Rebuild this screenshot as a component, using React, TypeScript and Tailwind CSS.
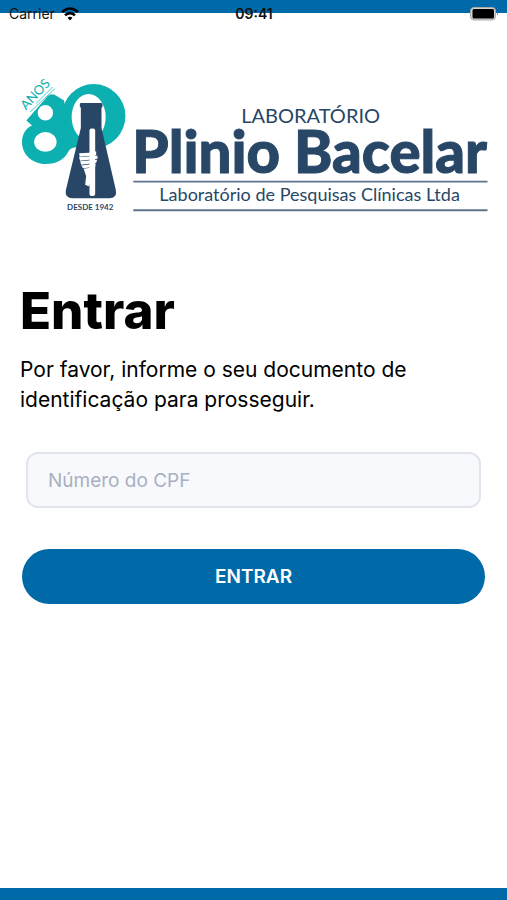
import { useState } from 'react';

function Logo() {
    return (
        <svg viewBox="21 78 466 136" className="block w-full overflow-visible" role="img" aria-label="Laboratório Plinio Bacelar">
            {/* 80 */}
            <g fill="#0db0b0">
                <path
                    fillRule="evenodd"
                    d="M94.5 84 A31.7 32 0 1 1 94.5 148 A31.7 32 0 1 1 94.5 84Z M89.5 94 A17 23 0 1 0 89.5 140 A17 23 0 1 0 89.5 94Z"
                />
                <path
                    fillRule="evenodd"
                    d="M27.300 120.500 L48.700 96 Q51.500 93 55.500 94.800 L65 100.500 L68 125 L80 140 L78 147 Q71.500 147 69.500 151 Q63 163.700 46.500 163.700 C33 163.700 23 154 23 142 C23 134 27 128 33 125.500Z M46.300 105 A7.700 7.700 0 1 0 46.300 120.400 A7.700 7.700 0 1 0 46.300 105Z M46.300 132 A11.200 9.800 0 1 0 46.300 151.600 A11.200 9.800 0 1 0 46.300 132Z"
                />
            </g>
            <text x="27" y="110.500" transform="rotate(-47 27 110.500)" fontSize="13" fill="#0db0b0" className="font-['Lato']">
                ANOS
            </text>
            <path d="M31 112 L56 88.500 M37 103.500 L53.500 87" stroke="#0db0b0" strokeWidth=".7" />

            {/* Flask */}
            <path
                d="M80.700 104 Q80.700 103 82 103 H102 Q103.300 103 103.300 104 V107.300 H102.300 V128 L116.700 190 Q118 198 110 198 H73.500 Q65.500 198 66.700 190 L81.700 128 V107.300 H80.700Z"
                fill="#284767"
            />
            <rect x="90.300" y="128.300" width="5.700" height="67.500" rx="2" fill="#fff" />
            {/* Hand */}
            <g fill="#fff">
                <path d="M80 153 L90 152.500 L97 151 V155 L80.500 156.500Z" />
                <path d="M79.800 157 L98.300 155.500 V158.500 L81 160.500Z" />
                <path d="M81 161.200 L98 159.500 L97 162.500 L82 164.500Z" />
                <path d="M82 165.200 L96.500 163.500 L96 166.500 L84 168Z" />
                <path d="M84.500 168.500 L91 167.500 V184 L89.500 186 L86 184.500 L87 176Z" />
            </g>

            <g fill="#284767" className="font-['Lato']">
                <text x="68" y="210" fontSize="8" className="font-bold">DESDE 1942</text>
                <text x="311" y="123" fontSize="20" textAnchor="middle">LABORATÓRIO</text>
                <text x="310" y="173" fontSize="58" textAnchor="middle" stroke="#284767" className="font-black">Plinio Bacelar</text>
                <text x="310" y="201" fontSize="18" textAnchor="middle">Laboratório de Pesquisas Clínicas Ltda</text>
            </g>
            <path d="M134 181.500 H487.500 M134 210 H487.500" stroke="#5d748d" strokeWidth="1.800" />
        </svg>
    );
}

function StatusBar() {
    return (
        <div className="absolute inset-x-0 top-0 grid grid-cols-3 items-center pt-1 pr-2 pl-[9px] text-sm leading-5 text-[#111]">
            <div className="flex items-center gap-1.5">
                <span>Carrier</span>
                <svg viewBox="0 0 18 14" className="h-3.5 w-[18px]" fill="none" stroke="#000" strokeWidth="2.5">
                    <path d="M1 5 Q9 -2 17 5" />
                    <path d="M4 8.300 Q9 4 14 8.300" />
                    <path d="M6.500 10.700 Q9 8.600 11.500 10.700 L9 13.500Z" fill="#000" stroke="none" />
                </svg>
            </div>
            <time className="text-center font-semibold">09:41</time>
            <svg viewBox="0 0 29 14" className="h-3.5 w-[29px] justify-self-end">
                <rect x=".5" y=".5" width="25" height="12.500" rx="3.500" fill="#d4d4d4" stroke="#aaa" />
                <rect x="2.500" y="2" width="21.500" height="9.500" rx="1.500" fill="#000" />
                <path d="M27 4.500 Q29 6.500 27 8.800Z" fill="#888" />
            </svg>
        </div>
    );
}

export default function App() {
    const [cpf, setCpf] = useState('');

    return (
        <div className="relative flex min-h-screen flex-col bg-white font-['Inter',sans-serif] text-black">
            <header className="h-[13px] bg-[#0069a7]">
                <StatusBar />
            </header>

            <main className="flex-1 px-5 pt-[65px]">
                <Logo />

                <h1 className="mt-16 text-[51px] leading-[66px] font-extrabold">Entrar</h1>
                <p className="mt-[11px] text-[21px] leading-[30px]">
                    Por favor, informe o seu documento de identificação para prosseguir.
                </p>

                <form onSubmit={(e) => e.preventDefault()}>
                    <div className="mt-[37px] px-1.5">
                        <input
                            type="text"
                            inputMode="numeric"
                            aria-label="Número do CPF"
                            placeholder="Número do CPF"
                            value={cpf}
                            onChange={(e) => setCpf(e.target.value)}
                            className="block h-14 w-full rounded-xl border-2 border-[#e2e5ee] bg-[#f7f9fd] px-5 text-[19px] placeholder:text-[#a9b0c0]"
                        />
                    </div>
                    <div className="mt-[41px] px-0.5">
                        <button
                            type="submit"
                            className="block h-[55px] w-full rounded-full bg-[#0069a7] text-[19px] font-semibold text-white"
                        >
                            ENTRAR
                        </button>
                    </div>
                </form>
            </main>

            <footer className="h-3 bg-[#0069a7]" />
        </div>
    );
}
